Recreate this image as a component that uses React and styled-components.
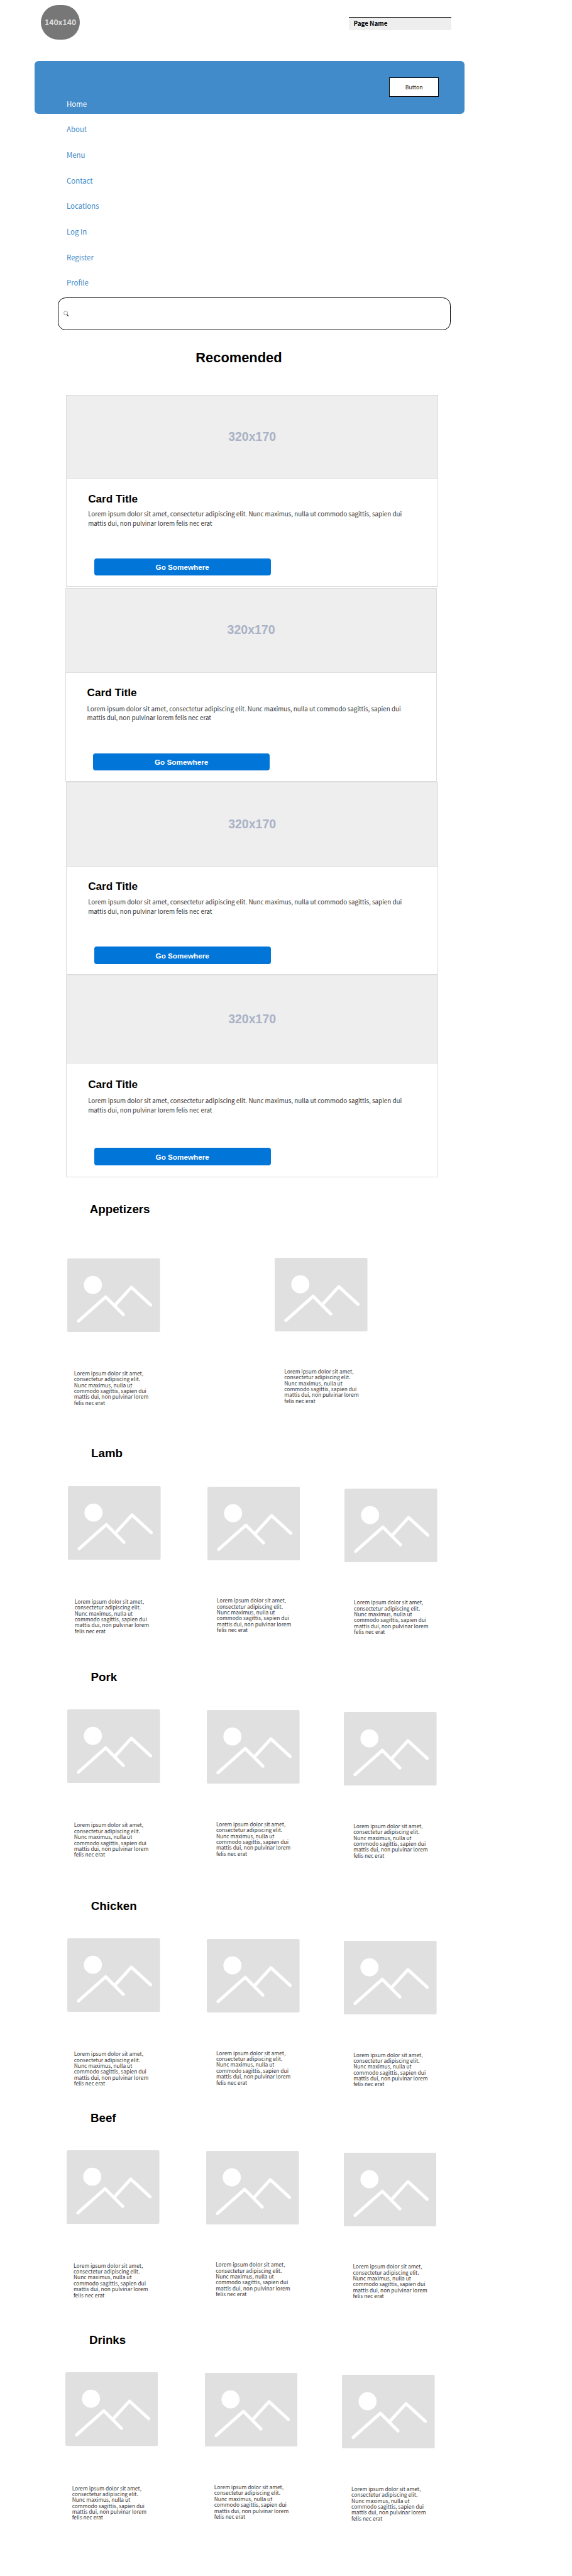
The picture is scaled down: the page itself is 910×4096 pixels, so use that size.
import React from "react";
import styled, { createGlobalStyle } from "styled-components";

const SCALE = 0.781;
const u = (n) => `${(n * SCALE).toFixed(3)}px`;

const BODY_FONT = `"Noto Sans CJK SC", "Noto Sans", sans-serif`;
const HEAD_FONT = `"Liberation Sans", Arial, sans-serif`;

const LOREM =
  "Lorem ipsum dolor sit amet, consectetur adipiscing elit. Nunc maximus, nulla ut commodo sagittis, sapien dui mattis dui, non pulvinar lorem felis nec erat";

const GlobalStyle = createGlobalStyle`
  *, *::before, *::after { box-sizing: border-box; }
  body { margin: 0; background: #fff; }
  h1, h2, h3, p, ul, figure { margin: 0; padding: 0; }
`;

const Page = styled.main`
  display: flex;
  flex-direction: column;
  width: 910px;
  height: 4096px;
  overflow: hidden;
  background: #fff;
  font-family: ${BODY_FONT};
`;

const Header = styled.header`
  display: flex;
  align-items: flex-start;
  flex: none;
  height: ${u(124)};
  padding: ${u(10)} 0 0 ${u(83)};
`;

const Logo = styled.div`
  display: flex;
  align-items: center;
  justify-content: center;
  width: ${u(80)};
  height: ${u(71)};
  border-radius: ${u(35.5)};
  background: #777;
  color: #dcdcdc;
  font-size: ${u(15.65)};
  font-weight: 700;
  line-height: 1;
`;

const PageName = styled.div`
  width: ${u(209.5)};
  height: ${u(27)};
  margin: ${u(24)} 0 0 ${u(547.5)};
  padding-left: ${u(9.8)};
  border-top: 1px solid #000;
  background: #eee;
  color: #000;
  font-size: ${u(12.6)};
  font-weight: 700;
  line-height: ${u(23.6)};
`;

const NavBar = styled.nav`
  display: flex;
  justify-content: space-between;
  align-items: flex-start;
  flex: none;
  width: ${u(876)};
  height: ${u(108)};
  margin-left: ${u(70)};
  padding: 0 ${u(52.3)} 0 ${u(65.8)};
  border-radius: ${u(8)};
  background: #428bca;
`;

const NavList = styled.ul`
  margin-top: ${u(61.5)};
  list-style: none;
`;

const NavItem = styled.li`
  height: ${u(52)};
  color: ${(p) => (p.$active ? "#fff" : "#428bca")};
  font-size: ${u(14.6)};
  line-height: ${u(52)};
`;

const NavButton = styled.button`
  width: ${u(100.7)};
  height: ${u(40.7)};
  margin-top: ${u(33)};
  padding: 1px 0 0;
  border: 1px solid #000;
  background: #fff;
  color: #222;
  font-family: inherit;
  font-size: ${u(11.2)};
  line-height: 1;
`;

const SearchBox = styled.div`
  display: flex;
  align-items: center;
  flex: none;
  width: ${u(800.3)};
  height: ${u(67.8)};
  margin: ${u(373)} 0 0 ${u(118)};
  padding-left: ${u(9.5)};
  border: 1px solid #000;
  border-radius: ${u(16)};
`;

const SearchGlyph = styled.svg`
  width: ${u(11)};
  height: ${u(12)};
`;

const PageTitle = styled.h1`
  margin: ${u(39.5)} 0 ${u(59.7)} ${u(398.6)};
  color: #000;
  font: 700 ${u(28)} / ${u(32)} ${HEAD_FONT};
`;

const CardStack = styled.div`
  display: flex;
  flex-direction: column;
  flex: none;
  height: ${u(1593.4)};
  margin-bottom: ${u(46.6)};
  padding-left: ${u(135)};
`;

const CardFrame = styled.article`
  flex: none;
  width: ${u(757.3)};
  height: ${(p) => u(p.$height)};
  margin-top: ${(p) => u(p.$gap)};
  margin-left: ${(p) => u(p.$shift)};
  border: 1px solid #ddd;
  background: #fff;
`;

const CardThumb = styled.div`
  display: flex;
  align-items: center;
  justify-content: center;
  height: ${(p) => u(p.$height)};
  border-bottom: 1px solid #ddd;
  background: #eee;
  color: #aab2c6;
  font: 700 ${u(25)} / 1 ${HEAD_FONT};
`;

const CardBody = styled.div`
  padding: ${(p) => u(p.$top)} 0 0 ${u(43.2)};
`;

const CardTitle = styled.h3`
  color: #000;
  font: 700 ${u(22)} / ${u(26)} ${HEAD_FONT};
`;

const CardText = styled.p`
  width: ${u(656)};
  margin-top: ${(p) => u(p.$gap)};
  color: #333;
  font-size: ${u(12.56)};
  line-height: ${u(19)};
`;

const CardButton = styled.button`
  display: block;
  width: ${u(359.6)};
  height: ${(p) => u(p.$height)};
  margin: ${(p) => u(p.$gap)} 0 0 ${u(12.3)};
  padding: ${u(2)} 0 0;
  border: 0;
  border-radius: ${u(5)};
  background: #0275d8;
  color: #fff;
  font: 700 ${u(15)} / 1 ${HEAD_FONT};
`;

const Section = styled.section`
  flex: none;
  height: ${(p) => u(p.$height)};
  padding-left: ${(p) => u(p.$left)};
`;

const SectionTitle = styled.h2`
  padding-left: ${(p) => u(p.$indent)};
  color: #000;
  font: 700 ${u(24)} / ${u(36)} ${HEAD_FONT};
`;

const DishRow = styled.div`
  display: flex;
  align-items: flex-start;
  margin-top: ${(p) => u(p.$gap)};
`;

const DishFigure = styled.figure`
  flex: none;
  width: ${u(189)};
  margin-left: ${(p) => u(p.$before)};
  margin-top: ${(p) => u(p.$drop)};
`;

const Picture = styled.svg`
  display: block;
  width: ${u(189)};
  height: ${u(150)};
`;

const Caption = styled.figcaption`
  width: ${u(156)};
  margin: ${(p) => u(p.$gap)} 0 0 ${(p) => u(p.$indent)};
  color: #383838;
  font-size: ${u(10.8)};
  line-height: ${u(12)};
`;

const NAV = ["Home", "About", "Menu", "Contact", "Locations", "Log In", "Register", "Profile"];

const CARDS = [
  { gap: 0, shift: 0, height: 390.8, thumb: 169.6, top: 27.4, textGap: 8.7, buttonGap: 61.9, button: 35 },
  { gap: 2.1, shift: -2, height: 394.9, thumb: 171.5, top: 27.4, textGap: 10.6, buttonGap: 62.2, button: 35 },
  { gap: 0.2, shift: 0, height: 393, thumb: 171.5, top: 27.2, textGap: 9.8, buttonGap: 61.6, button: 35 },
  { gap: 0.5, shift: 0, height: 411.9, thumb: 178.8, top: 29.2, textGap: 11.6, buttonGap: 65.9, button: 36.9 },
];

const THREE = [
  { before: 0, drop: 0, gap: 79.4, indent: 13.8 },
  { before: 95.2, drop: 1.2, gap: 76.3, indent: 19.2 },
  { before: 90.8, drop: 5.1, gap: 76.1, indent: 18.9 },
];
const TWO = [
  { before: 0, drop: 1.3, gap: 78.4, indent: 13.8 },
  { before: 234.2, drop: 0, gap: 75.7, indent: 18.9 },
];

const SECTIONS = [
  { name: "Appetizers", height: 497.6, left: 137, indent: 45.8, gap: 80.3, dishes: TWO },
  { name: "Lamb", height: 455.8, left: 138.2, indent: 47.6, gap: 47.6, dishes: THREE },
  { name: "Pork", height: 466, left: 137, indent: 48, gap: 47.2, dishes: THREE },
  { name: "Chicken", height: 430.6, left: 137, indent: 48.4, gap: 47, dishes: THREE },
  { name: "Beef", height: 453.2, left: 136, indent: 48.4, gap: 47.3, dishes: THREE },
  { name: "Drinks", height: 490, left: 133, indent: 48.7, gap: 47.1, dishes: THREE },
];

function DishPicture() {
  return (
    <Picture viewBox="0 0 189 150" aria-hidden="true">
      <rect width="189" height="150" rx="3" fill="#e0e0e0" />
      <circle cx="52.2" cy="54" r="18.4" fill="#fff" />
      <g fill="none" stroke="#fff" strokeWidth="6.4" strokeLinecap="round" strokeLinejoin="round">
        <path d="M22.8 127.6 78.4 78.4 114.2 114.2" />
        <path d="M97.4 95 130.6 58.8 169.8 94.7" />
      </g>
    </Picture>
  );
}

function Dish({ before, drop, gap, indent }) {
  return (
    <DishFigure $before={before} $drop={drop}>
      <DishPicture />
      <Caption $gap={gap} $indent={indent}>{LOREM}</Caption>
    </DishFigure>
  );
}

function Card({ card }) {
  return (
    <CardFrame $gap={card.gap} $shift={card.shift} $height={card.height}>
      <CardThumb $height={card.thumb}>320x170</CardThumb>
      <CardBody $top={card.top}>
        <CardTitle>Card Title</CardTitle>
        <CardText $gap={card.textGap}>{LOREM}</CardText>
        <CardButton $gap={card.buttonGap} $height={card.button}>Go Somewhere</CardButton>
      </CardBody>
    </CardFrame>
  );
}

export default function App() {
  return (
    <>
      <GlobalStyle />
      <Page>
        <Header>
          <Logo>140x140</Logo>
          <PageName>Page Name</PageName>
        </Header>
        <NavBar>
          <NavList>
            {NAV.map((label, i) => (
              <NavItem key={label} $active={i === 0}>{label}</NavItem>
            ))}
          </NavList>
          <NavButton>Button</NavButton>
        </NavBar>
        <SearchBox>
          <SearchGlyph viewBox="0 0 11 12" fill="none" aria-label="Search">
            <circle cx="4.6" cy="4.9" r="3.9" stroke="#777" strokeWidth="0.9" />
            <path d="M7 8 10.2 11.2" stroke="#000" strokeWidth="1.4" />
          </SearchGlyph>
        </SearchBox>
        <PageTitle>Recomended</PageTitle>
        <CardStack>
          {CARDS.map((card, i) => (
            <Card key={i} card={card} />
          ))}
        </CardStack>
        {SECTIONS.map((s) => (
          <Section key={s.name} $height={s.height} $left={s.left}>
            <SectionTitle $indent={s.indent}>{s.name}</SectionTitle>
            <DishRow $gap={s.gap}>
              {s.dishes.map((dish, i) => (
                <Dish key={i} {...dish} />
              ))}
            </DishRow>
          </Section>
        ))}
      </Page>
    </>
  );
}
